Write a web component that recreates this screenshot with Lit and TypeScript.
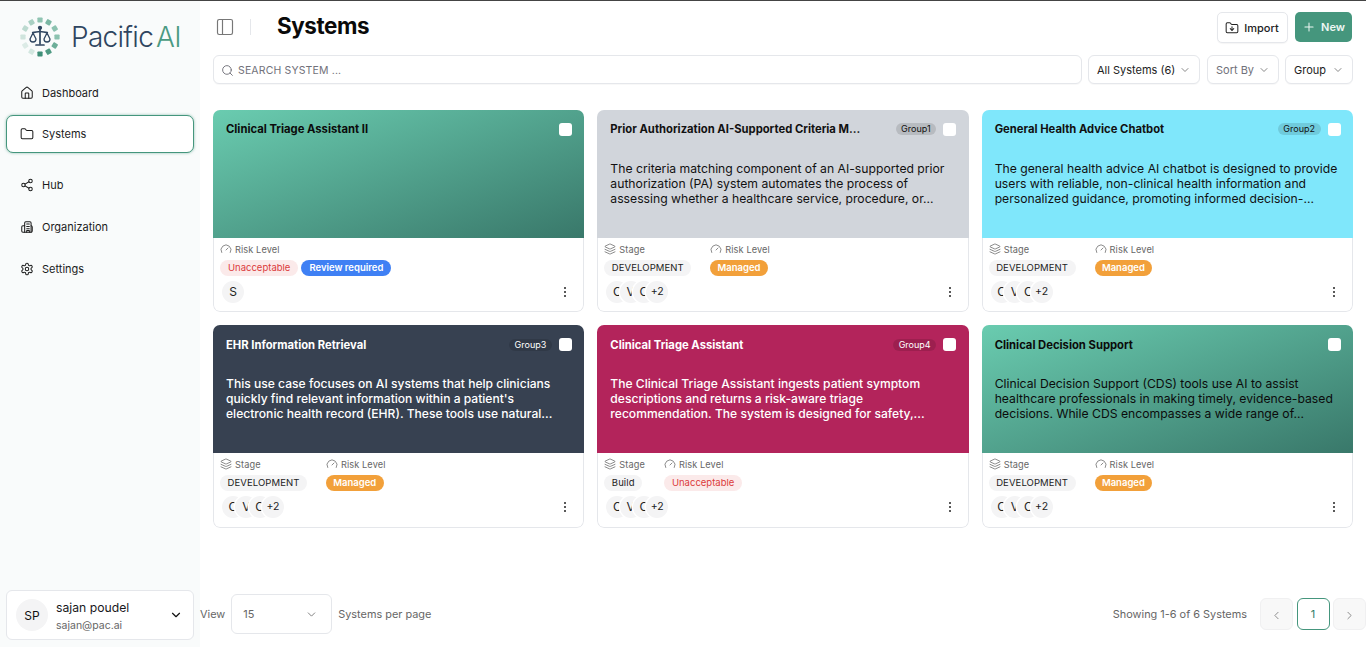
import {LitElement, css, html, svg, nothing} from 'lit';
import {customElement} from 'lit/decorators.js';

const icon = (body: unknown, size = 14, sw = 1.75) => html`<svg
  width=${size}
  height=${size}
  viewBox="0 0 24 24"
  fill="none"
  stroke="currentColor"
  stroke-width=${sw}
  stroke-linecap="round"
  stroke-linejoin="round"
>${body}</svg>`;

const folderPath = 'M20 20a2 2 0 0 0 2-2V8a2 2 0 0 0-2-2h-7.9a2 2 0 0 1-1.69-.9L9.6 3.9A2 2 0 0 0 7.93 3H4a2 2 0 0 0-2 2v13a2 2 0 0 0 2 2Z';

const icons = {
  home: svg`<path d="M15 21v-8a1 1 0 0 0-1-1h-4a1 1 0 0 0-1 1v8"/><path d="M3 10a2 2 0 0 1 .709-1.528l7-5.999a2 2 0 0 1 2.582 0l7 5.999A2 2 0 0 1 21 10v9a2 2 0 0 1-2 2H5a2 2 0 0 1-2-2z"/>`,
  folder: svg`<path d=${folderPath}/>`,
  folderDown: svg`<path d=${folderPath}/><path d="M12 10v6"/><path d="m15 13-3 3-3-3"/>`,
  share: svg`<circle cx="18" cy="5" r="3"/><circle cx="6" cy="12" r="3"/><circle cx="18" cy="19" r="3"/><path d="m8.59 13.51 6.83 3.98"/><path d="m15.41 6.51-6.82 3.98"/>`,
  org: svg`<path d="M8 21V5a2 2 0 0 1 2-2h7a2 2 0 0 1 2 2v16"/><path d="M8 10H5a2 2 0 0 0-2 2v7a2 2 0 0 0 2 2h14a2 2 0 0 0 2-2v-7a2 2 0 0 0-2-2"/><path d="M11.5 7H16"/><path d="M11.5 11H16"/><path d="M11.5 15H16"/><path d="M11.5 21v-3H16v3"/>`,
  settings: svg`<path d="M12.22 2h-.44a2 2 0 0 0-2 2v.18a2 2 0 0 1-1 1.73l-.43.25a2 2 0 0 1-2 0l-.15-.08a2 2 0 0 0-2.73.73l-.22.38a2 2 0 0 0 .73 2.73l.15.1a2 2 0 0 1 1 1.72v.51a2 2 0 0 1-1 1.74l-.15.09a2 2 0 0 0-.73 2.73l.22.38a2 2 0 0 0 2.73.73l.15-.08a2 2 0 0 1 2 0l.43.25a2 2 0 0 1 1 1.73V20a2 2 0 0 0 2 2h.44a2 2 0 0 0 2-2v-.18a2 2 0 0 1 1-1.73l.43-.25a2 2 0 0 1 2 0l.15.08a2 2 0 0 0 2.73-.73l.22-.39a2 2 0 0 0-.73-2.73l-.15-.08a2 2 0 0 1-1-1.74v-.5a2 2 0 0 1 1-1.74l.15-.09a2 2 0 0 0 .73-2.73l-.22-.38a2 2 0 0 0-2.73-.73l-.15.08a2 2 0 0 1-2 0l-.43-.25a2 2 0 0 1-1-1.73V4a2 2 0 0 0-2-2z"/><circle cx="12" cy="12" r="3"/>`,
  panel: svg`<rect x="3" y="3" width="18" height="18" rx="2"/><path d="M9 3v18"/>`,
  search: svg`<circle cx="11" cy="11" r="8"/><path d="m21 21-4.3-4.3"/>`,
  chevron: svg`<path d="m6 9 6 6 6-6"/>`,
  left: svg`<path d="m15 18-6-6 6-6"/>`,
  right: svg`<path d="m9 18 6-6-6-6"/>`,
  plus: svg`<path d="M5 12h14"/><path d="M12 5v14"/>`,
  layers: svg`<path d="m12.83 2.18a2 2 0 0 0-1.66 0L2.6 6.08a1 1 0 0 0 0 1.83l8.58 3.91a2 2 0 0 0 1.66 0l8.58-3.9a1 1 0 0 0 0-1.83Z"/><path d="m22 17.65-9.17 4.16a2 2 0 0 1-1.66 0L2 17.65"/><path d="m22 12.65-9.17 4.16a2 2 0 0 1-1.66 0L2 12.65"/>`,
  gauge: svg`<path d="m12 14 4-4"/><path d="M3.34 19a10 10 0 1 1 17.32 0"/>`,
};

// ring of little squares round the scales in the logo
const ringDots: [number, string][] = [
  [0, '#8fc4b2'],
  [30, '#7ab6a3'],
  [60, '#8cc2b0'],
  [90, '#8cc2b0'],
  [120, '#6dae99'],
  [150, '#4f9a83'],
  [180, '#3f8f78'],
  [210, '#d3e7e0'],
  [240, '#dcebe6'],
  [270, '#cfe4dd'],
  [300, '#bcdad0'],
  [330, '#a9d0c3'],
];

const logoMark = html`<svg width="40" height="42" viewBox="0 0 40 42">
  ${ringDots.map(
    ([deg, fill]) => svg`<rect
      x="17.4"
      y="1.4"
      width="5.2"
      height="5.2"
      rx="0.8"
      fill=${fill}
      transform="rotate(${deg} 20 21)"
    />`
  )}
  <g fill="none" stroke="#2f4560" stroke-width="1.3" stroke-linecap="round" stroke-linejoin="round">
    <circle cx="20" cy="11.8" r="1.5" fill="#2f4560" />
    <path d="M20 13v15" stroke-width="1.7" />
    <path d="M16 29h8" stroke-width="1.7" />
    <path d="M12.5 16.5c2.5 0 5-1 7.500-1s5 1 7.500 1" />
    <path d="M13 17l-3 6a3 3 0 0 0 6 0z" />
    <path d="M27 17l-3 6a3 3 0 0 0 6 0z" />
  </g>
</svg>`;

interface System {
  title: string;
  group?: string;
  desc?: string;
  tone: string;
  stage?: string;
  risk: string;
  riskTone: string;
  review?: boolean;
  owners: string[];
  more?: number;
}

const systems: System[] = [
  {
    title: 'Clinical Triage Assistant II',
    tone: 'green',
    risk: 'Unacceptable',
    riskTone: 'bad',
    review: true,
    owners: ['S'],
  },
  {
    title: 'Prior Authorization AI-Supported Criteria M...',
    group: 'Group1',
    desc: 'The criteria matching component of an AI-supported prior authorization (PA) system automates the process of assessing whether a healthcare service, procedure, or...',
    tone: 'gray',
    stage: 'DEVELOPMENT',
    risk: 'Managed',
    riskTone: 'warn',
    owners: ['C', 'V', 'C'],
    more: 2,
  },
  {
    title: 'General Health Advice Chatbot',
    group: 'Group2',
    desc: 'The general health advice AI chatbot is designed to provide users with reliable, non-clinical health information and personalized guidance, promoting informed decision-...',
    tone: 'cyan',
    stage: 'DEVELOPMENT',
    risk: 'Managed',
    riskTone: 'warn',
    owners: ['C', 'V', 'C'],
    more: 2,
  },
  {
    title: 'EHR Information Retrieval',
    group: 'Group3',
    desc: "This use case focuses on AI systems that help clinicians quickly find relevant information within a patient's electronic health record (EHR). These tools use natural...",
    tone: 'slate',
    stage: 'DEVELOPMENT',
    risk: 'Managed',
    riskTone: 'warn',
    owners: ['C', 'V', 'C'],
    more: 2,
  },
  {
    title: 'Clinical Triage Assistant',
    group: 'Group4',
    desc: 'The Clinical Triage Assistant ingests patient symptom descriptions and returns a risk-aware triage recommendation. The system is designed for safety,...',
    tone: 'rose',
    stage: 'Build',
    risk: 'Unacceptable',
    riskTone: 'bad',
    owners: ['C', 'V', 'C'],
    more: 2,
  },
  {
    title: 'Clinical Decision Support',
    desc: 'Clinical Decision Support (CDS) tools use AI to assist healthcare professionals in making timely, evidence-based decisions. While CDS encompasses a wide range of...',
    tone: 'green',
    stage: 'DEVELOPMENT',
    risk: 'Managed',
    riskTone: 'warn',
    owners: ['C', 'V', 'C'],
    more: 2,
  },
];

@customElement('app-root')
export class AppRoot extends LitElement {
  static override styles = css`
    :host {
      display: flex;
      height: 100vh;
      box-sizing: border-box;
      border-top: 1px solid #444;
      background: #fff;
      color: #111;
      font-family: Inter, 'Liberation Sans', sans-serif;
      font-size: 11px;
      overflow: hidden;
    }

    svg {
      display: block;
      flex: none;
    }

    /* sidebar */
    .sidebar {
      width: 200px;
      flex: none;
      background: #f9fbfb;
      display: flex;
      flex-direction: column;
      padding: 0 6px 7px;
      box-sizing: border-box;
    }
    .logo {
      height: 73px;
      display: flex;
      align-items: center;
      gap: 11px;
      padding: 0 0 1px 14px;
      box-sizing: border-box;
    }
    .wordmark {
      font-size: 28px;
      font-weight: 300;
      letter-spacing: -0.7px;
      color: #2f4560;
      white-space: nowrap;
    }
    .wordmark span {
      color: #4a9a82;
      margin-left: 3px;
    }
    .nav {
      display: flex;
      flex-direction: column;
      gap: 3px;
    }
    .nav.lower {
      gap: 4px;
      margin-top: 13px;
    }
    .nav-item {
      height: 38px;
      display: flex;
      align-items: center;
      gap: 8px;
      padding: 0 14px;
      box-sizing: border-box;
      font-size: 11px;
      color: #1c1c1c;
      border-radius: 7px;
    }
    .nav-item.active {
      background: #fff;
      border: 1px solid #45967d;
      padding: 0 13px;
      box-shadow: 0 0 3px rgba(69, 150, 125, 0.6);
    }
    .user {
      margin-top: auto;
      height: 50px;
      display: flex;
      align-items: center;
      gap: 8px;
      padding: 0 10px 0 9px;
      box-sizing: border-box;
      background: #fff;
      border: 1px solid #e5e7eb;
      border-radius: 6px;
    }
    .user-pic {
      width: 32px;
      height: 32px;
      border-radius: 50%;
      background: #f4f4f5;
      display: flex;
      align-items: center;
      justify-content: center;
      font-size: 12px;
    }
    .user-text {
      flex: 1;
      display: flex;
      flex-direction: column;
      gap: 4px;
      margin-top: 2px;
    }
    .user-name {
      font-size: 12.2px;
      color: #18181b;
    }
    .user-mail {
      font-size: 10.5px;
      color: #666;
    }

    /* main column */
    .main {
      flex: 1;
      min-width: 0;
      display: flex;
      flex-direction: column;
    }
    .topbar {
      height: 54px;
      flex: none;
      display: flex;
      align-items: center;
      padding: 0 14px 3px 14.5px;
      box-sizing: border-box;
    }
    .panel {
      color: #777;
    }
    .divider {
      width: 1px;
      height: 16px;
      background: #e5e7eb;
      margin: 0 26px 0 15.5px;
    }
    h1 {
      margin: 0 0 2px;
      font-size: 22.4px;
      font-weight: 700;
      letter-spacing: -0.4px;
      color: #0a0a0a;
    }
    .actions {
      margin-left: auto;
      display: flex;
      align-items: flex-start;
      gap: 7px;
      padding-top: 2px;
    }
    .btn {
      height: 31px;
      display: flex;
      align-items: center;
      justify-content: center;
      gap: 5px;
      box-sizing: border-box;
      border-radius: 5px;
      font-size: 11px;
      font-weight: 500;
    }
    .btn.import {
      width: 71px;
      padding-right: 1px;
      background: #fff;
      border: 1px solid #e5e7eb;
      box-shadow: 0 1px 1px rgba(0, 0, 0, 0.04);
      color: #222;
    }
    .btn.new {
      width: 57px;
      height: 30px;
      background: #45967d;
      color: #eef7f4;
      font-weight: 600;
    }
    .filters {
      height: 29px;
      flex: none;
      display: flex;
      gap: 6px;
      padding: 0 13px;
    }
    .field {
      display: flex;
      align-items: center;
      box-sizing: border-box;
      background: #fff;
      border: 1px solid #e5e7eb;
      border-radius: 6px;
      box-shadow: 0 1px 1px rgba(0, 0, 0, 0.03);
      font-size: 11px;
      white-space: nowrap;
    }
    .search {
      flex: 1;
      gap: 4px;
      padding: 1px 7px 0;
      color: #71717a;
      font-size: 10.5px;
      letter-spacing: 0.15px;
    }
    .pick {
      justify-content: space-between;
      padding: 0 8px;
      color: #222;
    }
    .pick svg {
      color: #777;
    }
    .pick.all {
      width: 112px;
    }
    .pick.sort {
      width: 72px;
      color: #71717a;
      margin-left: 1px;
    }
    .pick.group {
      width: 68px;
    }

    /* cards */
    .grid {
      display: grid;
      grid-template-columns: repeat(3, 1fr);
      gap: 13px;
      margin-top: 26px;
      padding: 0 13px;
    }
    .card {
      height: 202.4px;
      display: flex;
      flex-direction: column;
      box-sizing: border-box;
      border-radius: 7px;
      overflow: hidden;
    }
    .head {
      height: 128px;
      flex: none;
      padding: 12.3px 12.5px 0 13px;
      box-sizing: border-box;
    }
    .head.green {
      background: linear-gradient(to bottom right, #6accb0, #39786a);
      color: #0b0b0b;
    }
    .head.gray {
      background: #d1d5db;
      color: #111;
    }
    .head.cyan {
      background: #7fe7fb;
      color: #111;
    }
    .head.slate {
      background: #374151;
      color: #fff;
    }
    .head.rose {
      background: #b3245b;
      color: #fff;
    }
    .head-top {
      height: 14px;
      display: flex;
      align-items: center;
      gap: 7px;
    }
    .title {
      flex: 1;
      min-width: 0;
      font-size: 11.25px;
      font-weight: 700;
      white-space: nowrap;
    }
    .group-tag {
      height: 12px;
      line-height: 12px;
      padding: 0 5.5px;
      border-radius: 6px;
      font-size: 9px;
      background: rgba(0, 0, 0, 0.12);
    }
    .check {
      width: 13px;
      height: 13px;
      border-radius: 3px;
      background: #fff;
      flex: none;
    }
    .desc {
      margin: 24.7px 0 0;
      font-size: 12.2px;
      line-height: 15px;
      width: 345px;
    }
    .slate .desc,
    .rose .desc {
      font-weight: 500;
      font-size: 12.1px;
    }
    .body {
      flex: 1;
      display: flex;
      flex-direction: column;
      padding: 5px 6px 0;
      border: 1px solid #e5e7eb;
      border-top: none;
      border-radius: 0 0 7px 7px;
    }
    .meta {
      display: flex;
      gap: 19px;
    }
    .meta-col {
      display: flex;
      flex-direction: column;
      align-items: flex-start;
      gap: 5px;
    }
    .meta-label {
      height: 12px;
      display: flex;
      align-items: center;
      gap: 3px;
      font-size: 9.2px;
      color: #666;
      letter-spacing: 0.1px;
    }
    .badges {
      display: flex;
      gap: 3px;
    }
    .badge {
      height: 16px;
      line-height: 16px;
      padding: 0 8px;
      border-radius: 8px;
      font-size: 9.5px;
      white-space: nowrap;
    }
    .badge.plain {
      padding: 0 7.5px;
      background: #f4f4f5;
      color: #222;
      letter-spacing: 0.1px;
    }
    .badge.bad {
      background: #fbeaea;
      color: #dc3b3b;
    }
    .badge.warn {
      padding: 0 7.3px;
      background: #f2a03a;
      color: #fff;
      font-weight: 600;
    }
    .badge.info {
      background: #3f80f4;
      color: #fff;
      font-weight: 600;
    }
    .foot {
      margin-top: 4px;
      height: 23px;
      display: flex;
      align-items: center;
      justify-content: space-between;
      padding: 0 11px 0 2px;
    }
    .owners {
      display: flex;
    }
    .owner {
      position: relative;
      width: 22px;
      height: 22px;
      box-sizing: border-box;
      border-radius: 50%;
      background: #f4f4f5;
      display: flex;
      align-items: center;
      justify-content: center;
      font-size: 12px;
      color: #222;
      box-shadow: 0 0 0 1.5px #fff;
    }
    .owner + .owner {
      margin-left: -8.7px;
    }
    .owner.more {
      font-size: 10.5px;
    }
    .kebab {
      width: 2px;
      display: flex;
      flex-direction: column;
      gap: 2px;
    }
    .kebab i {
      display: block;
      width: 2px;
      height: 2px;
      border-radius: 50%;
      background: #222;
    }

    /* pagination */
    .pager {
      margin-top: auto;
      height: 40px;
      margin-bottom: 13px;
      display: flex;
      align-items: center;
      color: #666;
      font-size: 10.9px;
      white-space: nowrap;
    }
    .per-page {
      width: 101px;
      height: 40px;
      display: flex;
      align-items: center;
      justify-content: space-between;
      padding: 0 13px 0 11px;
      margin: 0 6px;
      box-sizing: border-box;
      border: 1px solid #e5e7eb;
      border-radius: 6px;
    }
    .showing {
      margin-left: auto;
      margin-right: 13px;
    }
    .pages {
      display: flex;
      gap: 3.5px;
    }
    .page {
      width: 33px;
      height: 32px;
      display: flex;
      align-items: center;
      justify-content: center;
      box-sizing: border-box;
      border: 1px solid #f0f0f1;
      border-radius: 6px;
      background: #f8f8f8;
      color: #888;
    }
    .page svg {
      margin-top: 3px;
    }
    .page.current {
      background: #fff;
      border-color: #45967d;
      color: #2f7d67;
    }
  `;

  private renderCard(s: System) {
    return html`
      <article class="card">
        <div class="head ${s.tone}">
          <div class="head-top">
            <div class="title">${s.title}</div>
            ${s.group ? html`<span class="group-tag">${s.group}</span>` : nothing}
            <span class="check"></span>
          </div>
          ${s.desc ? html`<p class="desc">${s.desc}</p>` : nothing}
        </div>
        <div class="body">
          <div class="meta">
            ${s.stage
              ? html`<div class="meta-col">
                  <span class="meta-label">${icon(icons.layers, 12, 1.5)} Stage</span>
                  <span class="badge plain">${s.stage}</span>
                </div>`
              : nothing}
            <div class="meta-col">
              <span class="meta-label">${icon(icons.gauge, 12, 1.5)} Risk Level</span>
              <div class="badges">
                <span class="badge ${s.riskTone}">${s.risk}</span>
                ${s.review ? html`<span class="badge info">Review required</span>` : nothing}
              </div>
            </div>
          </div>
          <div class="foot">
            <div class="owners">
              ${s.owners.map((o) => html`<span class="owner">${o}</span>`)}
              ${s.more ? html`<span class="owner more">+${s.more}</span>` : nothing}
            </div>
            <div class="kebab"><i></i><i></i><i></i></div>
          </div>
        </div>
      </article>
    `;
  }

  override render() {
    return html`
      <aside class="sidebar">
        <div class="logo">
          ${logoMark}
          <div class="wordmark">Pacific<span>AI</span></div>
        </div>
        <nav class="nav">
          <div class="nav-item">${icon(icons.home)} Dashboard</div>
          <div class="nav-item active">${icon(icons.folder)} Systems</div>
        </nav>
        <nav class="nav lower">
          <div class="nav-item">${icon(icons.share)} Hub</div>
          <div class="nav-item">${icon(icons.org)} Organization</div>
          <div class="nav-item">${icon(icons.settings)} Settings</div>
        </nav>
        <div class="user">
          <div class="user-pic">SP</div>
          <div class="user-text">
            <span class="user-name">sajan poudel</span>
            <span class="user-mail">sajan@pac.ai</span>
          </div>
          ${icon(icons.chevron, 14, 2)}
        </div>
      </aside>

      <main class="main">
        <header class="topbar">
          <span class="panel">${icon(icons.panel, 20, 1.4)}</span>
          <span class="divider"></span>
          <h1>Systems</h1>
          <div class="actions">
            <div class="btn import">${icon(icons.folderDown, 14)} Import</div>
            <div class="btn new">${icon(icons.plus, 14)} New</div>
          </div>
        </header>

        <div class="filters">
          <div class="field search">${icon(icons.search, 13)} SEARCH SYSTEM ...</div>
          <div class="field pick all">All Systems (6) ${icon(icons.chevron, 12)}</div>
          <div class="field pick sort">Sort By ${icon(icons.chevron, 12)}</div>
          <div class="field pick group">Group ${icon(icons.chevron, 12)}</div>
        </div>

        <section class="grid">${systems.map((s) => this.renderCard(s))}</section>

        <footer class="pager">
          <span>View</span>
          <div class="per-page">15 ${icon(icons.chevron, 13, 1.5)}</div>
          <span>Systems per page</span>
          <span class="showing">Showing 1-6 of 6 Systems</span>
          <div class="pages">
            <div class="page">${icon(icons.left, 13)}</div>
            <div class="page current">1</div>
            <div class="page">${icon(icons.right, 13)}</div>
          </div>
        </footer>
      </main>
    `;
  }
}
